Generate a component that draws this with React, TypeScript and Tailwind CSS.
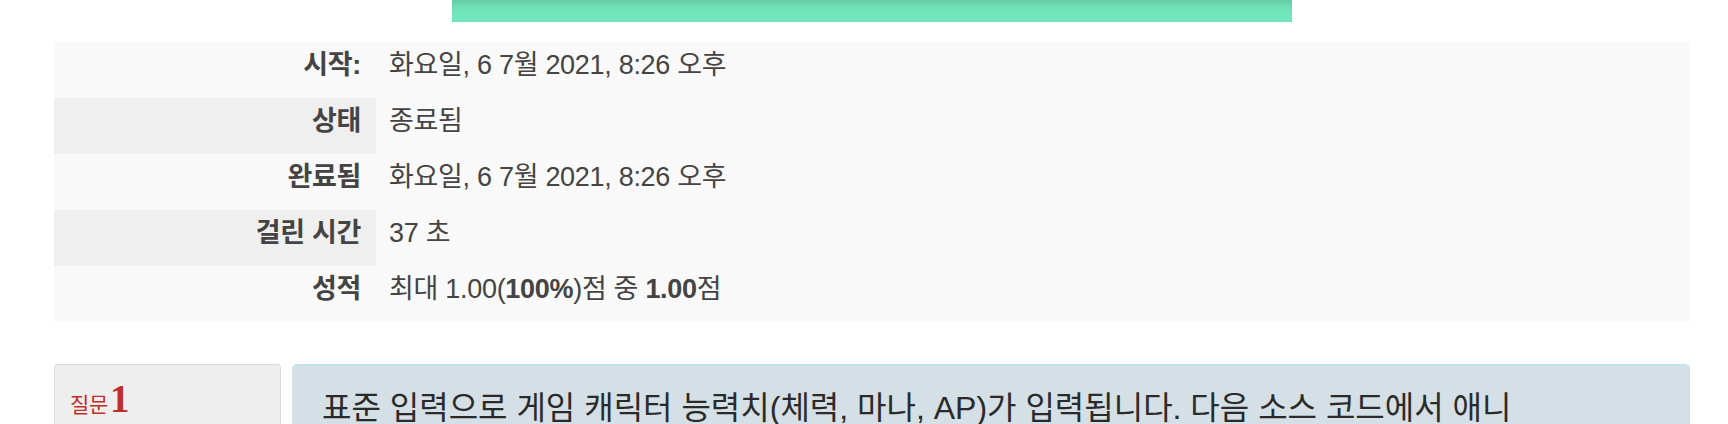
const font = { fontFamily: '"Liberation Sans", "Noto Sans CJK KR", sans-serif' }

function Row({ label, children, shade }: { label: string; children: React.ReactNode; shade?: boolean }) {
  return (
    <div className="flex h-[56px] bg-[#f9f9f9]">
      <div className={`flex w-[322px] shrink-0 items-start justify-end pt-[3px] pr-[15px] font-bold ${shade ? 'bg-[#efefef]' : ''}`}>
        {label}
      </div>
      <div className="flex items-start pt-[3px] pl-[13px]">{children}</div>
    </div>
  )
}

export default function App() {
  return (
    <div className="min-h-screen bg-white pl-[54px] pr-[38px] text-[27px] tracking-[-0.3px] text-[#444]" style={font}>
      <div className="mx-auto h-[22px] w-[840px] bg-[#74e6bd] shadow-[inset_0_10px_12px_-8px_rgba(0,0,0,0.18)]" />

      <div className="mt-[20px] flex flex-col">
        <Row label="시작:">화요일, 6 7월 2021, 8:26 오후</Row>
        <Row label="상태" shade>종료됨</Row>
        <Row label="완료됨">화요일, 6 7월 2021, 8:26 오후</Row>
        <Row label="걸린 시간" shade>37 초</Row>
        <Row label="성적">
          <span>
            최대 1.00(<b>100%</b>)점 중 <b>1.00</b>점
          </span>
        </Row>
      </div>

      <div className="mt-[42px] flex gap-[11px]">
        <div className="h-[120px] w-[227px] shrink-0 rounded-[3px] border border-[#dcdcdc] bg-[#eeeeee] px-[15px] pt-[14px]">
          <h3 className="flex items-baseline gap-[2px] text-[#c0302a]">
            <span className="text-[21px]">질문</span>
            <span className="text-[39px] font-bold leading-none" style={{ fontFamily: '"Liberation Serif", serif' }}>1</span>
          </h3>
        </div>
        <div className="h-[120px] flex-1 rounded-[5px] border-t border-r border-[#b9e3ef] bg-[#d4e0e5] px-[30px] pt-[19px]">
          <p className="text-[32px] tracking-[0px] text-[#2a2a2a]">
            표준 입력으로 게임 캐릭터 능력치(체력, 마나, AP)가 입력됩니다. 다음 소스 코드에서 애니
          </p>
        </div>
      </div>
    </div>
  )
}
